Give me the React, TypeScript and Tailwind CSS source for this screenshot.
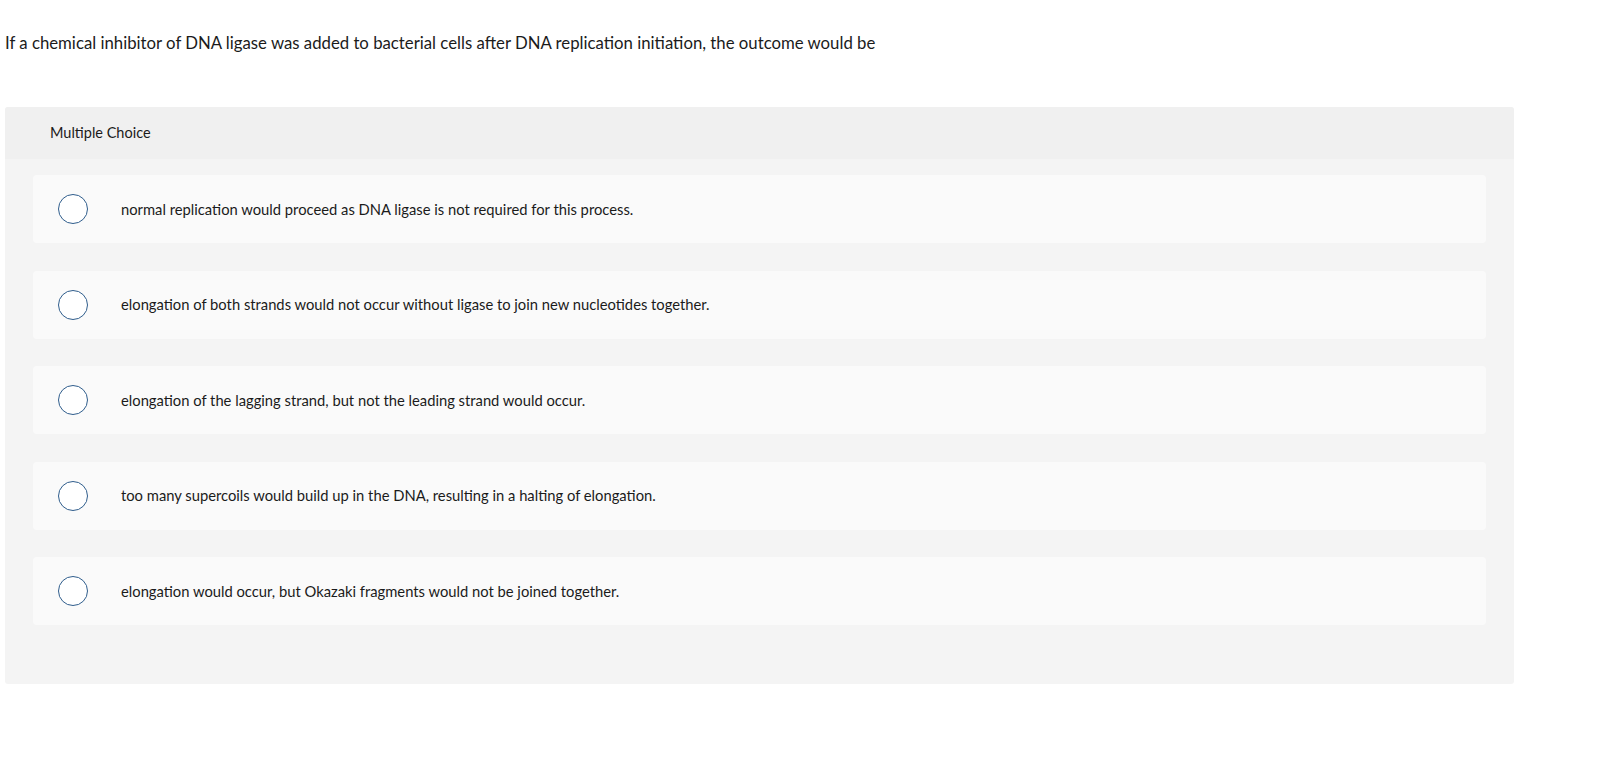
const question =
  "If a chemical inhibitor of DNA ligase was added to bacterial cells after DNA replication initiation, the outcome would be"

const choices = [
  "normal replication would proceed as DNA ligase is not required for this process.",
  "elongation of both strands would not occur without ligase to join new nucleotides together.",
  "elongation of the lagging strand, but not the leading strand would occur.",
  "too many supercoils would build up in the DNA, resulting in a halting of elongation.",
  "elongation would occur, but Okazaki fragments would not be joined together.",
]

export default function App() {
  return (
    <div className="min-h-screen bg-white font-['Lato','Liberation_Sans',sans-serif] text-[#1b1b1b]">
      <div className="pt-[33px] pl-[5px]">
        <p className="text-[16.75px] leading-[20px]">{question}</p>
      </div>

      <div className="ml-[5px] mt-[54px] w-[1509px] rounded-[3px] bg-[#f4f4f4]">
        {/* Header */}
        <div className="flex h-[52px] items-center rounded-t-[3px] bg-[#f0f0f0] pl-[45px] text-[14.5px]">
          Multiple Choice
        </div>

        {/* Options */}
        <div className="flex flex-col gap-[27.5px] px-[28px] pt-[16px] pb-[59px]">
          {choices.map((c) => (
            <label
              key={c}
              className="flex h-[68px] cursor-pointer items-center rounded-[4px] bg-[#fafafa] pl-[25px]"
            >
              <span className="h-[30px] w-[30px] shrink-0 rounded-full border-[1.5px] border-[#2f5d8c] bg-white" />
              <span className="ml-[33px] text-[14.75px]">{c}</span>
            </label>
          ))}
        </div>
      </div>
    </div>
  )
}
